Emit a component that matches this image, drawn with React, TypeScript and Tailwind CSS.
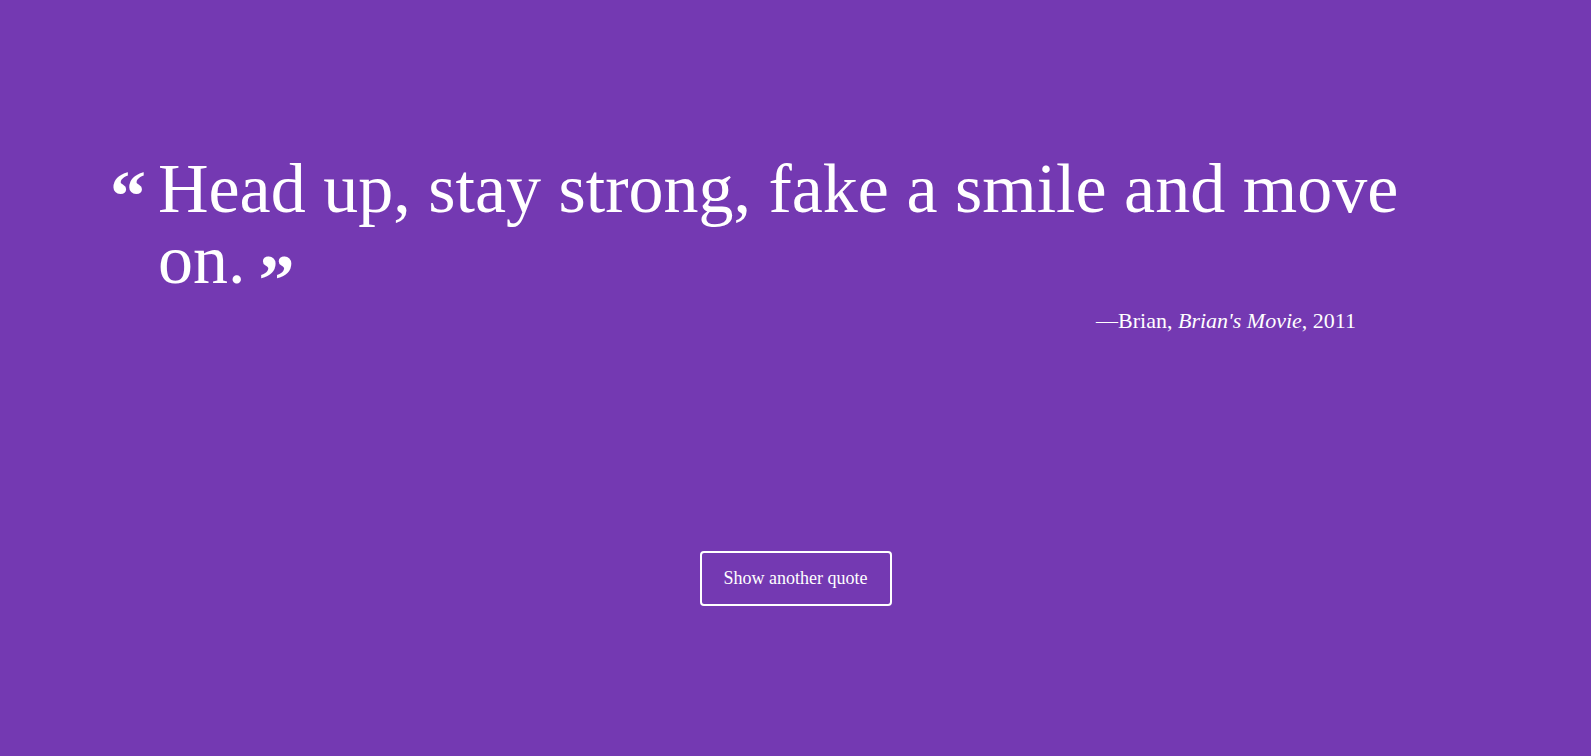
import React from 'react';

const quote = {
  lead: 'Head up, stay strong, fake a smile and move',
  last: 'on.',
  author: 'Brian',
  source: "Brian's Movie",
  year: 2011,
};

export default function App() {
  return (
    <div
      className="min-h-screen bg-[#7439b2] text-white flex flex-col"
      style={{ fontFamily: '"Liberation Serif", "DejaVu Serif", serif' }}
    >
      {/* Quote */}
      <div className="pt-[153px] pl-[110px] pr-[112px]">
        <blockquote className="flex">
          <span className="w-[48px] shrink-0 pt-[8px] text-[72px] leading-[71px] font-bold">“</span>
          <p className="w-[1290px] text-[70px] leading-[71px]">
            {quote.lead}{' '}
            <span className="whitespace-nowrap">
              <span>{quote.last}</span>
              <span className="ml-[13px] text-[72px] font-bold leading-[0] align-[-21px]">”</span>
            </span>
          </p>
        </blockquote>

        {/* Attribution */}
        <p className="mt-[12px] mr-[123px] text-right text-[22px] leading-[28px]">
          —{quote.author}, <em>{quote.source}</em>, {quote.year}
        </p>
      </div>

      {/* Action */}
      <div className="mt-[216px] flex justify-center">
        <button className="h-[55px] w-[192px] rounded border-2 border-white text-[18px] text-white">
          Show another quote
        </button>
      </div>
    </div>
  );
}
